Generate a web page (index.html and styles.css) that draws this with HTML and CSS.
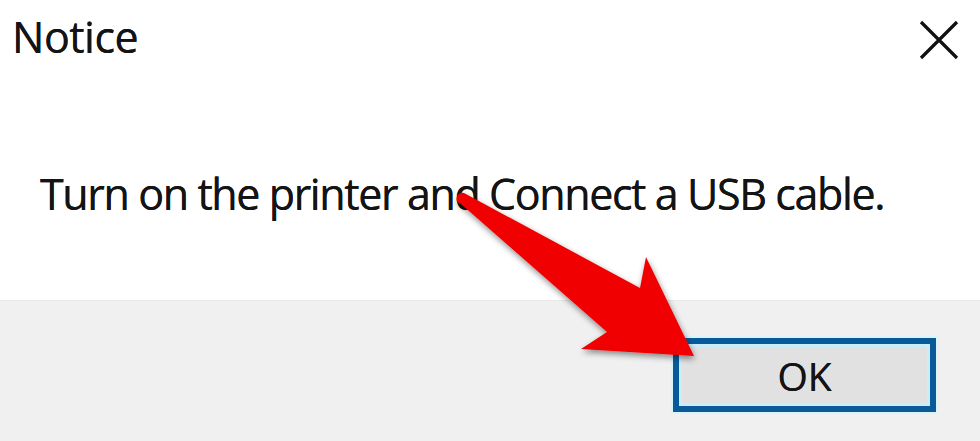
FILE: index.html
```html
<!DOCTYPE html>
<html lang="en">
<head>
  <meta charset="UTF-8" />
  <title>Notice</title>
  <link rel="stylesheet" href="styles.css">
</head>
<body>
  <div class="dialog">
    <div class="titlebar">
      <span class="title">Notice</span>
      <span class="close">
        <svg width="40" height="40" viewBox="0 0 40 40">
          <path d="M2 2 L38 38 M38 2 L2 38" stroke="#111" stroke-width="3.2" fill="none" />
        </svg>
      </span>
    </div>

    <div class="content">
      <p class="message">Turn on the printer and Connect a USB cable.</p>
    </div>

    <div class="footer">
      <button class="ok-btn">OK</button>
    </div>

    <svg class="arrow" width="980" height="441" viewBox="0 0 980 441">
      <defs>
        <filter id="schatten" x="-10%" y="-10%" width="130%" height="130%">
          <feGaussianBlur in="SourceAlpha" stdDeviation="3" />
          <feOffset dx="1" dy="3" result="blur" />
          <feComponentTransfer><feFuncA type="linear" slope="0.45" /></feComponentTransfer>
          <feMerge>
            <feMergeNode />
            <feMergeNode in="SourceGraphic" />
          </feMerge>
        </filter>
      </defs>
      <path d="M457 197 Q459 192 464 193 L640 288 L646 257 L694 356 L581 349 L607 332 L461 204 Q455 202 457 197 Z"
            fill="#f00000" filter="url(#schatten)" />
    </svg>
  </div>
</body>
</html>
```

FILE: styles.css
```css
body {
  margin: 0;
  font-family: "Open Sans", "Noto Sans", sans-serif;
  color: #141414;
  background: white;
}

.dialog {
  position: relative;
  width: 980px;
  height: 441px;
  overflow: hidden;
}

.titlebar {
  height: 92px;
  display: flex;
  justify-content: space-between;
  align-items: flex-start;
}

.title {
  font-size: 43px;
  line-height: 43px;
  padding-top: 15px;
  padding-left: 12px;
  letter-spacing: -0.5px;
  text-shadow: 0 0 0.6px #141414;
}

.close {
  margin-top: 20px;
  margin-right: 21px;
}

.content {
  height: 208px;
}

.message {
  margin: 0;
  padding-top: 80px;
  padding-left: 40px;
  font-size: 43px;
  line-height: 43px;
  letter-spacing: -1.4px;
  text-shadow: 0 0 0.6px #141414;
}

.footer {
  height: 141px;
  background-color: #f0f0f0;
  border-top: 1px solid #e8e8e8;
  box-sizing: border-box;
  display: flex;
  justify-content: flex-end;
  align-items: flex-start;
  padding-top: 37px;
  padding-right: 44px;
}

.ok-btn {
  width: 263px;
  height: 74px;
  background-color: #e1e1e1;
  border: 6px solid #0a5a9a;
  box-shadow: inset 0 0 0 3px #c8eefc, 0 0 0 2px #d8f4fc;
  font-family: "Open Sans", "Noto Sans", sans-serif;
  font-size: 39px;
  color: #141414;
  padding: 0;
  text-shadow: 0 0 0.6px #141414;
}

.arrow {
  position: absolute;
  left: 0;
  top: 0;
  pointer-events: none;
}
```
